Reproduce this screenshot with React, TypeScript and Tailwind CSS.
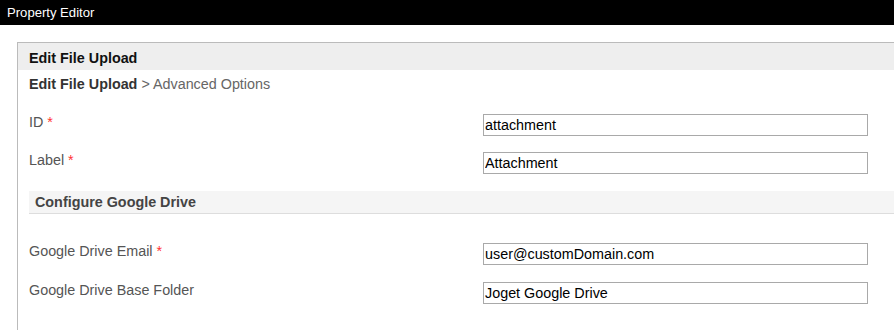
import React from "react";

const font = { fontFamily: '"Liberation Sans", Arial, sans-serif' };

function Field({ label, value, required, className = "" }: { label: string; value: string; required?: boolean; className?: string }) {
  return (
    <div className={`flex items-start ${className}`}>
      <div className="w-[454px] shrink-0 text-[14.35px] leading-[16px] text-[#555]">
        {label}
        {required && <span className="text-[#ff3333]"> *</span>}
      </div>
      <input
        readOnly
        value={value}
        className="box-border h-[22px] w-[385px] border border-[#a9a9a9] bg-white pl-[1px] text-[14.35px] leading-[20px] text-black outline-none"
        style={font}
      />
    </div>
  );
}

export default function App() {
  return (
    <div className="h-[330px] w-[894px] overflow-hidden bg-white" style={font}>
      <div className="flex h-[25px] items-center bg-black pl-[7px] text-[13.1px] leading-[15px] text-white">
        Property Editor
      </div>
      <div className="ml-[17px] mt-[17px] h-[300px] w-[877px] border-l border-t border-[#bbbbbb]">
        <div className="flex h-[27px] items-center bg-[#eeeeee] pl-[11px] pt-[2px] text-[14.35px] font-bold leading-[16px] text-[#111]">
          Edit File Upload
        </div>
        <div className="pl-[11px]">
          <div className="mt-[6px] text-[14.35px] leading-[16px] text-[#666]">
            <span className="font-bold text-[#333]">Edit File Upload</span> &gt; Advanced Options
          </div>
          <Field className="mt-[22px]" label="ID" value="attachment" required />
          <Field className="mt-[16px]" label="Label" value="Attachment" required />
          <div className="mt-[17px] flex h-[23px] items-center border-b border-[#dddddd] bg-[#f5f5f5] pl-[6px] text-[14.35px] font-bold leading-[16px] text-[#444]">
            Configure Google Drive
          </div>
          <Field className="mt-[29px]" label="Google Drive Email" value="user@customDomain.com" required />
          <Field className="mt-[17px]" label="Google Drive Base Folder" value="Joget Google Drive" />
        </div>
      </div>
    </div>
  );
}
